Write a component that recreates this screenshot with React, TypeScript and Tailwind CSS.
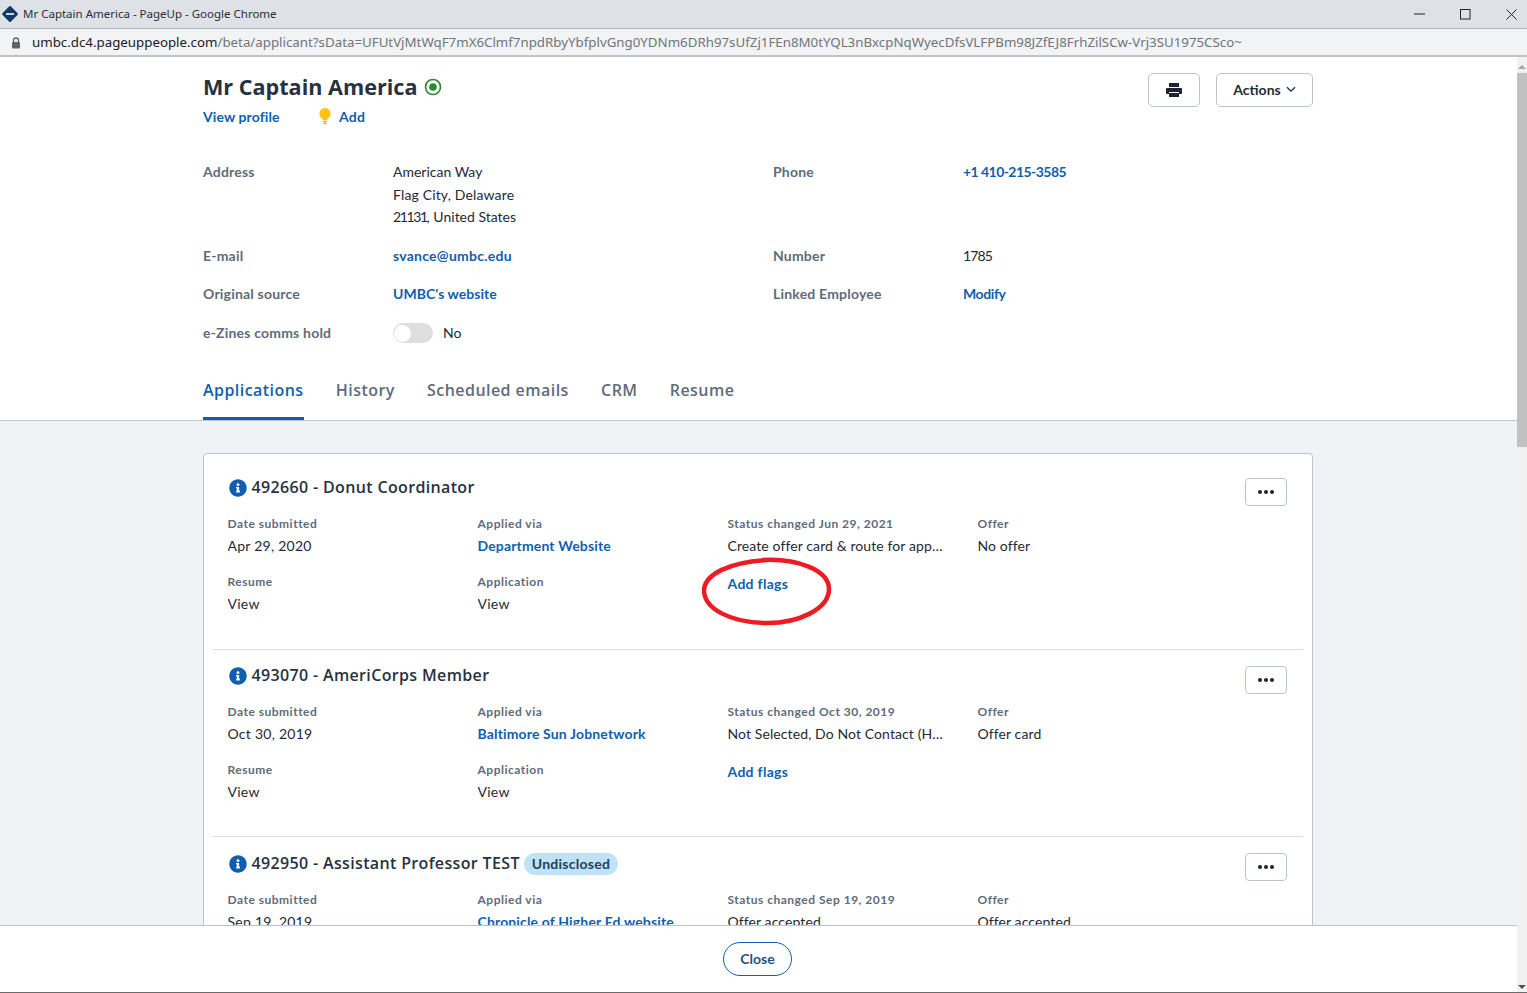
import React from "react";
import { FaInfoCircle } from "react-icons/fa";

const body = "font-['Lato','Liberation_Sans',sans-serif]";
const head = "font-['Open_Sans','Noto_Sans',sans-serif]";
const linkBase = "text-[#0f5fae] font-bold";
const link = `${linkBase} tracking-[0.2px]`;

function Info({ label, children, h = "h-[38px]" }: { label: string; children: React.ReactNode; h?: string }) {
  return (
    <div className={`flex ${h}`}>
      <div className="w-[190px] text-[14px] leading-[22.5px] font-bold tracking-[0.2px] text-[#5f6b7a]">{label}</div>
      <div className="text-[14px] leading-[22.5px] text-[#1f2a37]">{children}</div>
    </div>
  );
}

function Field({ label, value, isLink, tight }: { label: string; value: string; isLink?: boolean; tight?: boolean }) {
  const valueClass = isLink ? `${linkBase} tracking-[0.15px]` : tight ? "text-[#1f2a37] tracking-[0.1px]" : "text-[#1f2a37] tracking-[0.25px]";
  return (
    <div className="w-[250px]">
      <div className="text-[12px] leading-[16px] font-bold tracking-[0.5px] text-[#5f6b7a]">{label}</div>
      <div className={`mt-[3px] h-[22px] truncate pr-[34px] text-[14px] leading-[22px] ${valueClass}`}>{value}</div>
    </div>
  );
}

function Section({ title, badge, date, via, status, statusText, offer, border = true, top = "pt-[24px]", h, low }: {
  title: string; badge?: string; date: string; via: string; status: string; statusText: string; offer: string; border?: boolean; top?: string; h: string; low?: boolean;
}) {
  return (
    <div className={`mx-[9px] px-[14.5px] ${top} ${h} ${border ? "border-b border-[#d9dee8]" : ""}`}>
      <div className="flex items-start justify-between pr-[1.5px]">
        <div className={`${low ? "-mt-[1px]" : "-mt-[2px]"} flex h-[22px] items-center`}>
          <FaInfoCircle className="ml-[1px] mr-[5px] mt-[2px] text-[18px] text-[#0f5fae]" />
          <span className={`${head} text-[16px] font-semibold text-[#27323f] tracking-[0.35px]`}>{title}</span>
          {badge && <span className="ml-[4px] mt-[1px] h-[22px] rounded-full bg-[#bfe3f6] px-[8px] text-[14px] leading-[22px] font-bold tracking-[0.25px] text-[#24405c]">{badge}</span>}
        </div>
        <button className="flex h-[28px] w-[42px] items-center justify-center gap-[2px] rounded-[4px] border border-[#b8c4d0] bg-white">
          <i className="size-[4px] rounded-full bg-[#1b2430]" />
          <i className="size-[4px] rounded-full bg-[#1b2430]" />
          <i className="size-[4px] rounded-full bg-[#1b2430]" />
        </button>
      </div>
      <div className={`${low ? "mt-[11px]" : "mt-[10px]"} flex`}>
        <Field label="Date submitted" value={date} />
        <Field label="Applied via" value={via} isLink />
        <Field label={status} value={statusText} tight />
        <Field label="Offer" value={offer} tight />
      </div>
      <div className="mt-[17px] flex">
        <Field label="Resume" value="View" />
        <Field label="Application" value="View" />
        <div className={`-mt-[1px] w-[250px] text-[14px] leading-[22px] ${linkBase} tracking-[0.3px]`}>Add flags</div>
      </div>
    </div>
  );
}

export default function App() {
  return (
    <div className={`flex h-[993px] w-[1527px] flex-col overflow-hidden bg-white ${body}`}>
      {/* Chrome title bar */}
      <div className="flex h-[29px] shrink-0 items-center justify-between border-b border-[#b4b6ba] bg-[#dee1e6] font-['Noto_Sans',sans-serif] text-[11.5px] text-[#2b2f36]">
        <div className="flex items-center">
          <svg width="18" height="18" viewBox="0 0 18 18" className="ml-[1px] mr-[4px]">
            <path d="M8 1.6a1.4 1.4 0 0 1 2 0L16.4 8a1.4 1.4 0 0 1 0 2L10 16.4a1.4 1.4 0 0 1-2 0L1.6 10a1.4 1.4 0 0 1 0-2Z" fill="#123a66" />
            <rect x="5" y="8" width="8" height="2" fill="#c9d6e4" />
          </svg>
          <span>Mr Captain America - PageUp - Google Chrome</span>
        </div>
        <div className="flex items-center">
          <svg width="11" height="2" className="mr-[35px]"><rect width="11" height="1" y="0.5" fill="#222" /></svg>
          <svg width="11" height="11" className="mr-[35px]"><rect x="0.5" y="0.5" width="9.5" height="9.5" fill="none" stroke="#222" /></svg>
          <svg width="11" height="11" className="mr-[10px]"><path d="M0.5 .5 10.5 10.5M10.5 .5 .5 10.5" stroke="#222" /></svg>
        </div>
      </div>
      {/* URL bar */}
      <div className="flex h-[28px] shrink-0 items-center border-b-2 border-[#c1c3c6] bg-[#f1f3f4] pt-[1px] font-['Noto_Sans',sans-serif] text-[13.3px]">
        <svg width="10" height="12" viewBox="0 0 10 12" className="ml-[11px] mr-[11px]">
          <path d="M2.5 5V3.5a2.5 2.5 0 0 1 5 0V5" fill="none" stroke="#5f6368" strokeWidth="1.3" />
          <rect x="1" y="5" width="8" height="6.5" rx="1" fill="#5f6368" />
        </svg>
        <span className="whitespace-nowrap text-[#70757a]"><span className="text-[#202124]">umbc.dc4.pageuppeople.com</span>/beta/applicant?sData=UFUtVjMtWqF7mX6Clmf7npdRbyYbfplvGng0YDNm6DRh97sUfZj1FEn8M0tYQL3nBxcpNqWyecDfsVLFPBm98JZfEJ8FrhZilSCw-Vrj3SU1975CSco~</span>
      </div>

      <div className="flex min-h-0 flex-1">
        <div className="flex min-w-0 flex-1 flex-col">
          <div className="min-h-0 flex-1 overflow-hidden">
            {/* Header */}
            <div className="border-b border-[#b8c4d0] bg-white">
              <div className="ml-[203px] w-[1110px]">
                <div className="flex items-start justify-between pt-[13px]">
                  <div>
                    <div className="flex h-[34px] items-center">
                      <h1 className={`${head} text-[21.6px] font-bold text-[#27323f]`}>Mr Captain America</h1>
                      <svg width="18" height="18" viewBox="0 0 18 18" className="ml-[7px]">
                        <circle cx="9" cy="9" r="7.5" fill="none" stroke="#2f8a35" strokeWidth="1.7" />
                        <circle cx="9" cy="9" r="3.8" fill="#2f8a35" />
                      </svg>
                    </div>
                    <div className="mt-[1px] flex h-[22px] items-center text-[14px]">
                      <span className={`${linkBase} tracking-[0.1px] w-[115px]`}>View profile</span>
                      <svg width="14" height="18" viewBox="0 0 14 18" className="mr-[7px]">
                        <path d="M7 1a5.6 5.6 0 0 0-3.2 10.2c.7.6 1 1.2 1 2h4.4c0-.8.3-1.4 1-2A5.6 5.6 0 0 0 7 1Z" fill="#fcc419" />
                        <rect x="5" y="14" width="4" height="1.3" fill="#f0a30a" />
                        <rect x="5.6" y="16" width="2.8" height="1.3" fill="#f0a30a" />
                      </svg>
                      <span className={link}>Add</span>
                    </div>
                  </div>
                  <div className="flex gap-[16px] pt-[3px]">
                    <button className="flex h-[34px] w-[52px] items-center justify-center rounded-[5px] border border-[#b8c4d0] bg-white">
                      <svg width="16" height="14" viewBox="0 0 16 14">
                        <rect x="3" y="0" width="10" height="4" fill="#1b2430" />
                        <rect x="0" y="5" width="16" height="6" rx="1" fill="#1b2430" />
                        <rect x="3" y="9" width="10" height="1" fill="#fff" />
                        <rect x="3" y="10" width="10" height="4" fill="#1b2430" />
                      </svg>
                    </button>
                    <button className="flex h-[34px] w-[97px] items-center justify-center gap-[5px] rounded-[5px] border border-[#b8c4d0] bg-white pb-[2px] text-[14px] font-bold text-[#1f2a37]">
                      Actions
                      <svg width="10" height="7" viewBox="0 0 10 7"><path d="M1 1.2 5 5.2 9 1.2" fill="none" stroke="#1f2a37" strokeWidth="1.3" /></svg>
                    </button>
                  </div>
                </div>
                <div className="mt-[34px] grid grid-cols-[570px_540px]">
                  <div>
                    <Info label="Address" h="h-[84px]">American Way<br /><span className="tracking-[0.15px]">Flag City, Delaware</span><br /><span className="tracking-[-1.4px]">21131</span>, United States</Info>
                    <Info label="E-mail"><span className={`${linkBase} tracking-[0.25px]`}>svance@umbc.edu</span></Info>
                    <Info label="Original source" h="h-[39px]"><span className={`${linkBase} tracking-[0.05px]`}>UMBC's website</span></Info>
                    <Info label="e-Zines comms hold" h="h-[23px]">
                      <div className="flex items-center">
                        <div className="mr-[10px] flex h-[20px] w-[40px] items-center rounded-full bg-[#dedede] pl-[1px]">
                          <div className="size-[17px] rounded-full bg-white" />
                        </div>
                        No
                      </div>
                    </Info>
                  </div>
                  <div>
                    <Info label="Phone" h="h-[84px]"><span className={`${linkBase} tracking-[-0.55px]`}>+1 410-215-3585</span></Info>
                    <Info label="Number"><span className="tracking-[-0.9px]">1785</span></Info>
                    <Info label="Linked Employee"><span className={`${linkBase} tracking-[-0.4px]`}>Modify</span></Info>
                  </div>
                </div>
                {/* Tabs */}
                <div className={`mt-[29px] flex h-[46px] gap-[32.25px] ${head} text-[16px] font-semibold tracking-[0.45px] text-[#5f6b7a]`}>
                  <div className="h-[46px] border-b-[3px] border-[#0f5fae] pt-[4px] text-[#0f5fae]">Applications</div>
                  <div className="pt-[4px]">History</div>
                  <div className="pt-[4px]">Scheduled emails</div>
                  <div className="pt-[4px]">CRM</div>
                  <div className="pt-[4px]">Resume</div>
                </div>
              </div>
            </div>
            {/* Applications */}
            <div className="h-[600px] bg-[#eff3f6] pl-[203px] pt-[32px]">
              <div className="relative w-[1110px] rounded-[4px] border border-[#b8c4d0] bg-white">
                <Section title="492660 - Donut Coordinator" date="Apr 29, 2020" via="Department Website" status="Status changed Jun 29, 2021" statusText="Create offer card & route for approval" offer="No offer" h="h-[196px]" />
                <Section title="493070 - AmeriCorps Member" date="Oct 30, 2019" via="Baltimore Sun Jobnetwork" status="Status changed Oct 30, 2019" statusText="Not Selected, Do Not Contact (HR use only)" offer="Offer card" top="pt-[16px]" h="h-[187px]" />
                <Section title="492950 - Assistant Professor TEST" badge="Undisclosed" date="Sep 19, 2019" via="Chronicle of Higher Ed website" status="Status changed Sep 19, 2019" statusText="Offer accepted" offer="Offer accepted" border={false} top="pt-[16px]" h="h-[187px]" low />
                <svg width="134" height="70" viewBox="0 0 134 70" className="absolute left-[498px] top-[103px]">
                  <path d="M60 3C95 1 127 13 127 32 127 52 96 67 62 66 28 65 3 52 2 34 2 17 28 5 66 3" fill="none" stroke="#ed1c24" strokeWidth="4.5" />
                </svg>
              </div>
            </div>
          </div>
          {/* Footer */}
          <div className="flex h-[67px] shrink-0 items-center justify-center border-t border-[#b8c4d0] bg-white">
            <button className="mr-[2px] h-[34px] w-[69px] rounded-full border border-[#0f5fae] bg-white pb-[2px] text-[14px] font-bold text-[#1f4f86]">Close</button>
          </div>
        </div>
        {/* Scrollbar */}
        <div className="flex w-[10px] shrink-0 flex-col items-center bg-[#f1f1f1]">
          <div className="mt-[8px] size-0 border-x-[4px] border-b-[4px] border-x-transparent border-b-[#a3a3a3]" />
          <div className="mt-[4px] h-[374px] w-full bg-[#c1c1c1]" />
          <div className="mt-auto mb-[3px] size-0 border-x-[4px] border-t-[4px] border-x-transparent border-t-[#505050]" />
        </div>
      </div>
      <div className="h-[1px] shrink-0 bg-[#6b6b6b]" />
    </div>
  );
}
